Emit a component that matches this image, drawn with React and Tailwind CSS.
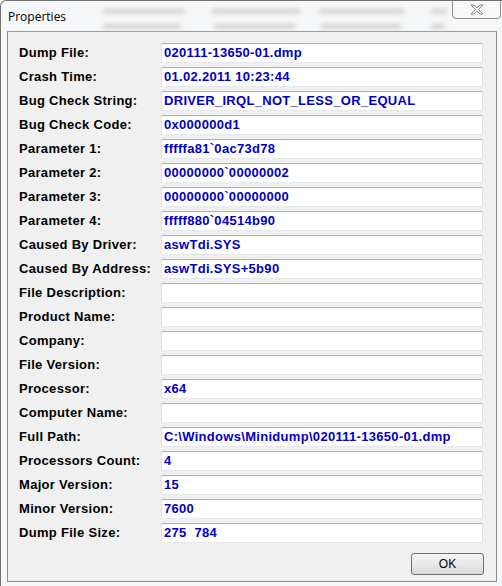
import React from "react";

const rows = [
  ["Dump File:", "020111-13650-01.dmp"],
  ["Crash Time:", "01.02.2011 10:23:44"],
  ["Bug Check String:", "DRIVER_IRQL_NOT_LESS_OR_EQUAL"],
  ["Bug Check Code:", "0x000000d1"],
  ["Parameter 1:", "fffffa81`0ac73d78"],
  ["Parameter 2:", "00000000`00000002"],
  ["Parameter 3:", "00000000`00000000"],
  ["Parameter 4:", "fffff880`04514b90"],
  ["Caused By Driver:", "aswTdi.SYS"],
  ["Caused By Address:", "aswTdi.SYS+5b90"],
  ["File Description:", ""],
  ["Product Name:", ""],
  ["Company:", ""],
  ["File Version:", ""],
  ["Processor:", "x64"],
  ["Computer Name:", ""],
  ["Full Path:", "C:\\Windows\\Minidump\\020111-13650-01.dmp"],
  ["Processors Count:", "4"],
  ["Major Version:", "15"],
  ["Minor Version:", "7600"],
  ["Dump File Size:", "275  784"],
];

const streaks = [
  { top: "top-[8px]", items: ["left-[102px] w-[82px]", "left-[210px] w-[90px]", "left-[318px] w-[86px]", "left-[430px] w-[16px]"] },
  { top: "top-[23px]", items: ["left-[102px] w-[78px]", "left-[213px] w-[82px]", "left-[320px] w-[80px]", "left-[430px] w-[14px]"] },
];

function Field({ value }) {
  return (
    <div className="h-[20px] w-[322px] rounded-[2px] border border-t-[#abadb3] border-x-[#dbdfe6] border-b-[#e3e9ef] bg-white pl-[2px] leading-[18px] text-[#0000c4] font-bold text-[13px] tracking-[0.3px] whitespace-pre">
      {value}
    </div>
  );
}

export default function App() {
  return (
    <div
      className="relative w-[502px] h-[586px] overflow-hidden bg-[#f6f7f8] border-l border-t border-[#707070] rounded-tl-[6px]"
      style={{ fontFamily: '"Liberation Sans", Arial, sans-serif' }}
    >
      {/* blurred desktop behind the glass frame */}
      {streaks.map((s, i) =>
        s.items.map((c, j) => (
          <div key={`${i}-${j}`} className={`absolute ${s.top} ${c} h-[5px] rounded-full bg-[#d2d2d2] blur-[2px]`} />
        ))
      )}

      <div className="relative flex h-[30px] items-start">
        <span
          className="pl-[7px] pt-[7px] text-[12px] text-black"
          style={{ fontFamily: '"Open Sans", "Noto Sans", sans-serif' }}
        >
          Properties
        </span>
        <button className="absolute left-[451px] top-[-1px] flex h-[19px] w-[49px] items-center justify-center rounded-b-[4px] border border-[#8d8d8d] bg-[#f8f8f8]/80">
          <svg width="14" height="11" viewBox="0 0 14 11">
            <path
              d="M1 1h3l3 3 3-3h3l-4.5 4.5L13 10h-3L7 7l-3 3H1l4.5-4.5z"
              fill="#fff"
              stroke="#8a8a8a"
              strokeWidth="1"
              strokeLinejoin="round"
            />
          </svg>
        </button>
      </div>

      <div className="ml-[6px] h-[551px] w-[490px] border border-[#8c8c8c] border-t-[#9b9b9b] bg-[#f0f0f0] pl-[11px] pr-[12px] pt-[11px]">
        <div className="flex flex-col gap-[4px]">
          {rows.map(([label, value]) => (
            <div key={label} className="flex h-[20px] items-center">
              <div className="w-[142px] font-bold text-[13px] tracking-[0.3px] text-black">{label}</div>
              <Field value={value} />
            </div>
          ))}
        </div>
        <div className="flex justify-end pt-[10px]">
          <button className="h-[22px] w-[73px] rounded-[3px] border border-[#707070] bg-gradient-to-b from-[#f3f3f3] via-[#e9e9e9] to-[#d8d8d8] text-[12px] text-black">
            OK
          </button>
        </div>
      </div>
    </div>
  );
}
